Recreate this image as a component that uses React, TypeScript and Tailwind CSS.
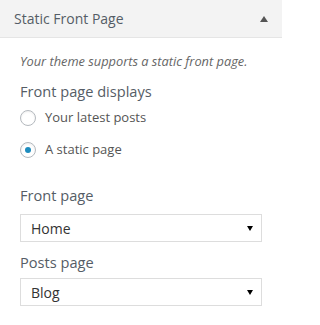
const font = { fontFamily: '"Open Sans", "Liberation Sans", sans-serif' };

function Radio({ label, checked }: { label: string; checked?: boolean }) {
  return (
    <label className="flex h-[32px] items-center gap-[9px]">
      <span className="flex h-[16px] w-[16px] items-center justify-center rounded-full border border-[#b4b9be] bg-white shadow-[inset_0_1px_2px_rgba(0,0,0,0.07)]">
        {checked && <span className="h-[6px] w-[6px] rounded-full bg-[#1e8cbe]" />}
      </span>
      <span className="text-[13px] text-[#555]">{label}</span>
    </label>
  );
}

function Select({ value }: { value: string }) {
  return (
    <div className="flex h-[28px] w-[242px] items-center justify-between border border-[#ddd] bg-white pl-[10px] pr-[8px]">
      <span className="text-[14px] text-[#333]">{value}</span>
      <svg width="6" height="5" viewBox="0 0 6 5">
        <path d="M0 0h6L3 5z" fill="#000" />
      </svg>
    </div>
  );
}

export default function App() {
  return (
    <div className="h-[325px] w-[282px] bg-white" style={font}>
      <div className="flex h-[38px] items-center justify-between border-b border-[#e5e5e5] bg-[#f3f3f3] pl-[14px] pr-[14px]">
        <span className="text-[14px] text-[#555d66]">Static Front Page</span>
        <svg width="8" height="6" viewBox="0 0 8 6">
          <path d="M0 6h8L4 0z" fill="#555" />
        </svg>
      </div>
      <div className="px-[20px] pt-[12px]">
        <p className="text-[12.8px] italic leading-[22px] text-[#666]">Your theme supports a static front page.</p>
        <p className="mt-[8px] text-[14.6px] leading-[22px] text-[#555d66]">Front page displays</p>
        <div>
          <Radio label="Your latest posts" />
          <Radio label="A static page" checked />
        </div>
        <p className="mt-[18px] text-[14.6px] leading-[22px] text-[#555d66]">Front page</p>
        <div className="mt-[8px]">
          <Select value="Home" />
        </div>
        <p className="mt-[9px] text-[14.6px] leading-[22px] text-[#555d66]">Posts page</p>
        <div className="mt-[5px]">
          <Select value="Blog" />
        </div>
      </div>
    </div>
  );
}
